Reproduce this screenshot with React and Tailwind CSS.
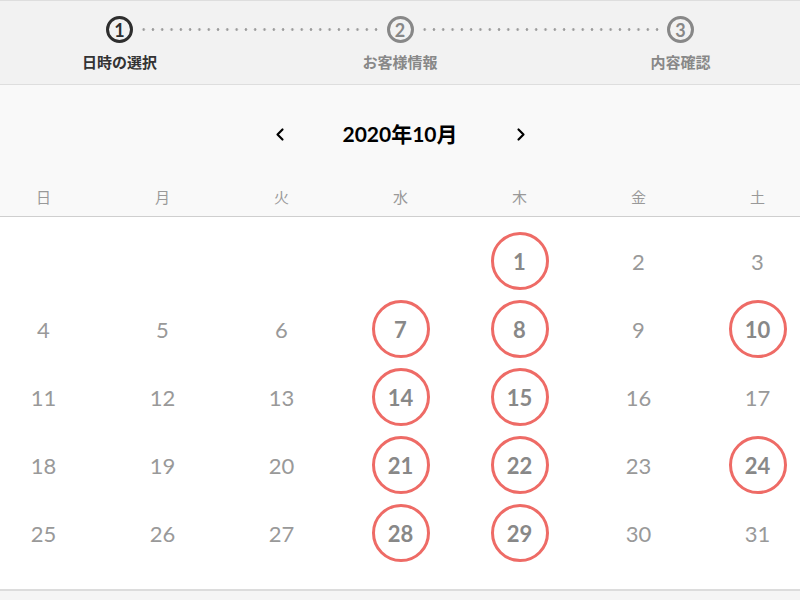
import { ChevronLeft, ChevronRight } from "lucide-react";

const steps = [
  { n: "1", label: "日時の選択", active: true },
  { n: "2", label: "お客様情報", active: false },
  { n: "3", label: "内容確認", active: false },
];

const weekdays = ["日", "月", "火", "水", "木", "金", "土"];
const available = [1, 7, 8, 10, 14, 15, 21, 22, 24, 28, 29];

function Step({ step }) {
  return (
    <div className="flex flex-col items-center w-[27px]">
      <div
        className={
          step.active
            ? "w-[27px] h-[27px] rounded-full border-[3px] border-[#2e2e2e] text-[#2e2e2e] flex items-center justify-center text-[18px] font-bold leading-none"
            : "w-[27px] h-[27px] rounded-full border-[3px] border-[#888] text-[#888] flex items-center justify-center text-[18px] font-bold leading-none"
        }
      >
        {step.n}
      </div>
      <div
        className={
          step.active
            ? "mt-[8px] whitespace-nowrap text-[15px] font-bold text-[#333]"
            : "mt-[8px] whitespace-nowrap text-[15px] font-bold text-[#888]"
        }
      >
        {step.label}
      </div>
    </div>
  );
}

function Dots() {
  return (
    <div className="flex-1 h-[3px] mt-[12px] mx-[6px] bg-[radial-gradient(circle,#9a9a9a_1px,transparent_1.6px)] bg-[length:9.3px_3px]" />
  );
}

export default function App() {
  const cells = [];
  for (let i = 0; i < 4; i++) cells.push(null);
  for (let d = 1; d <= 31; d++) cells.push(d);

  return (
    <div
      className="w-[800px] h-[600px] overflow-hidden bg-[#f5f5f5]"
      style={{ fontFamily: "Lato, 'Noto Sans CJK JP', sans-serif" }}
    >
      {/* progress steps */}
      <div className="h-[85px] bg-[#f2f2f2] border-t border-b border-[#dedede] flex items-start px-[106px] pt-[15px]">
        <Step step={steps[0]} />
        <Dots />
        <Step step={steps[1]} />
        <Dots />
        <Step step={steps[2]} />
      </div>

      {/* calendar header */}
      <div className="bg-[#f9f9f9] border-b border-[#cfcfcf]">
        <div className="h-[96px] flex items-center justify-center pt-[2px]">
          <button className="w-[20px] flex justify-center text-black">
            <ChevronLeft size={21} strokeWidth={2.6} />
          </button>
          <div className="w-[221px] text-center text-[21px] font-bold text-black">
            2020年10月
          </div>
          <button className="w-[20px] flex justify-center text-black">
            <ChevronRight size={21} strokeWidth={2.6} />
          </button>
        </div>
        <div className="w-[833px] -ml-[16px] grid grid-cols-7 h-[35px] items-start pt-[4px]">
          {weekdays.map((w) => (
            <div key={w} className="text-center text-[15px] text-[#999] leading-[24px]">
              {w}
            </div>
          ))}
        </div>
      </div>

      {/* days */}
      <div className="bg-white border-b-2 border-[#dcdcdc] pt-[10px] pb-[22px]">
        <div className="w-[833px] -ml-[16px] grid grid-cols-7">
          {cells.map((d, i) => (
            <div key={i} className="h-[68px] flex items-center justify-center">
              {d &&
                (available.includes(d) ? (
                  <div className="w-[58px] h-[58px] rounded-full border-[3px] border-[#ee6b66] flex items-center justify-center text-[22px] font-bold text-[#888]">
                    {d}
                  </div>
                ) : (
                  <span className="text-[22px] text-[#999]">{d}</span>
                ))}
            </div>
          ))}
        </div>
      </div>
    </div>
  );
}
